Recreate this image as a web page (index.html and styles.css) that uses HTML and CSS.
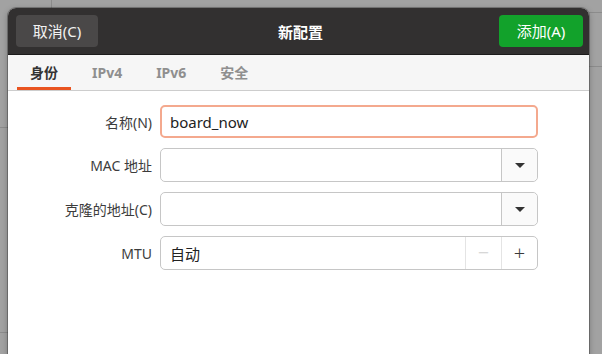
FILE: index.html
```html
<!DOCTYPE html>
<html lang="zh-CN">
<head>
  <meta charset="utf-8">
  <title>新配置</title>
  <link rel="stylesheet" href="styles.css">
</head>
<body>
<div class="desk">
  <div class="bgline v1"></div>
  <div class="bgline h1"></div>
  <div class="bgline h2"></div>
  <div class="bgline h3"></div>
  <div class="bgline h4"></div>
</div>

<div class="dialog">
  <div class="headerbar">
    <button class="btn cancel">取消(C)</button>
    <div class="title">新配置</div>
    <button class="btn add">添加(A)</button>
  </div>

  <div class="tabs">
    <div class="tab active">身份</div>
    <div class="tab">IPv4</div>
    <div class="tab">IPv6</div>
    <div class="tab">安全</div>
  </div>

  <div class="form">
    <label class="lbl">名称(N)</label>
    <div class="field focus"><span class="val">board_now</span></div>

    <label class="lbl">MAC 地址</label>
    <div class="field combo">
      <span class="val"></span>
      <span class="drop"><i class="arrow"></i></span>
    </div>

    <label class="lbl">克隆的地址(C)</label>
    <div class="field combo">
      <span class="val"></span>
      <span class="drop"><i class="arrow"></i></span>
    </div>

    <label class="lbl">MTU</label>
    <div class="field spin">
      <span class="val">自动</span>
      <span class="sbtn minus">−</span>
      <span class="sbtn plus">+</span>
    </div>
  </div>
</div>
</body>
</html>
```

FILE: styles.css
```css
html, body{
  margin:0;
  height:100%;
  overflow:hidden;
}

body{
  background:#a2a2a2;
  font-family:"Noto Sans", "Noto Sans CJK SC", sans-serif;
  font-size:14px;
  color:#3c3c3c;
  position:relative;
}

/* windows behind the dialog */
.desk{
  position:absolute;
  inset:0;
}

.bgline{
  position:absolute;
  background:#8c8c8c;
}

.v1{ left:51px; top:0; width:1px; height:8px; }
.h1{ left:0; top:127px; width:8px; height:1px; }
.h2{ left:0; top:332px; width:8px; height:1px; }
.h3{ left:589px; top:12px; width:13px; height:1px; }
.h4{ left:589px; top:66px; width:13px; height:1px; }

.dialog{
  position:relative;
  margin:8px 0 0 8px;
  width:581px;
  height:360px;
  background:#fff;
  border-radius:8px 8px 0 0;
  box-shadow:0 0 0 1px rgba(0,0,0,0.25), 0 2px 6px rgba(0,0,0,0.3);
  overflow:hidden;
}

.headerbar{
  height:46px;
  background:#323030;
  border-bottom:1px solid #1c1b1b;
  display:flex;
  align-items:center;
  padding:0 6px 0 8px;
  box-sizing:content-box;
}

.btn{
  font-family:"Noto Sans", "Noto Sans CJK SC", sans-serif;
  font-size:15px;
  height:32px;
  border:none;
  border-radius:4px;
  color:#f2f2f2;
  padding:0;
  margin-top:-1px;
}

.cancel{
  width:82px;
  background:#4a4848;
}

.add{
  width:84px;
  background:#12a22b;
  color:#fff;
}

.title{
  flex:1;
  text-align:center;
  color:#fff;
  font-weight:bold;
  font-size:15px;
  margin-right:-4px;
}

.tabs{
  height:35px;
  background:#f6f6f6;
  border-bottom:1px solid #cdcdcd;
  display:flex;
  padding-left:9px;
  gap:8px;
}

.tab{
  padding:0 13px;
  line-height:35px;
  font-weight:bold;
  font-size:14px;
  color:#8f8f8f;
  box-sizing:border-box;
  height:35px;
}

.tab.active{
  color:#333;
  box-shadow:inset 0 -3px 0 #e95420;
}

.form{
  display:grid;
  grid-template-columns:144px 378px;
  column-gap:8px;
  row-gap:10px;
  padding-top:14px;
  align-items:center;
}

.lbl{
  text-align:right;
  font-size:14px;
  color:#3c3c3c;
}

.field{
  height:34px;
  border:1px solid #c6c6c6;
  border-radius:5px;
  box-sizing:border-box;
  display:flex;
  align-items:stretch;
  background:#fff;
}

.field.focus{
  border:2px solid #f4a98e;
  height:33px;
}

.val{
  flex:1;
  display:flex;
  align-items:center;
  padding-left:9px;
  font-size:15px;
  color:#222;
}

.focus .val{
  padding-left:8px;
}

.drop{
  width:35px;
  border-left:1px solid #c6c6c6;
  background:#fafafa;
  border-radius:0 5px 5px 0;
  display:flex;
  align-items:center;
  justify-content:center;
}

.arrow{
  width:0;
  height:0;
  border-left:5px solid transparent;
  border-right:5px solid transparent;
  border-top:5px solid #333;
}

.sbtn{
  width:35px;
  border-left:1px solid #e4e4e4;
  display:flex;
  align-items:center;
  justify-content:center;
  font-size:20px;
  font-weight:300;
  line-height:1;
}

.minus{
  color:#d0d0d0;
}

.plus{
  color:#3a3a3a;
}
```
